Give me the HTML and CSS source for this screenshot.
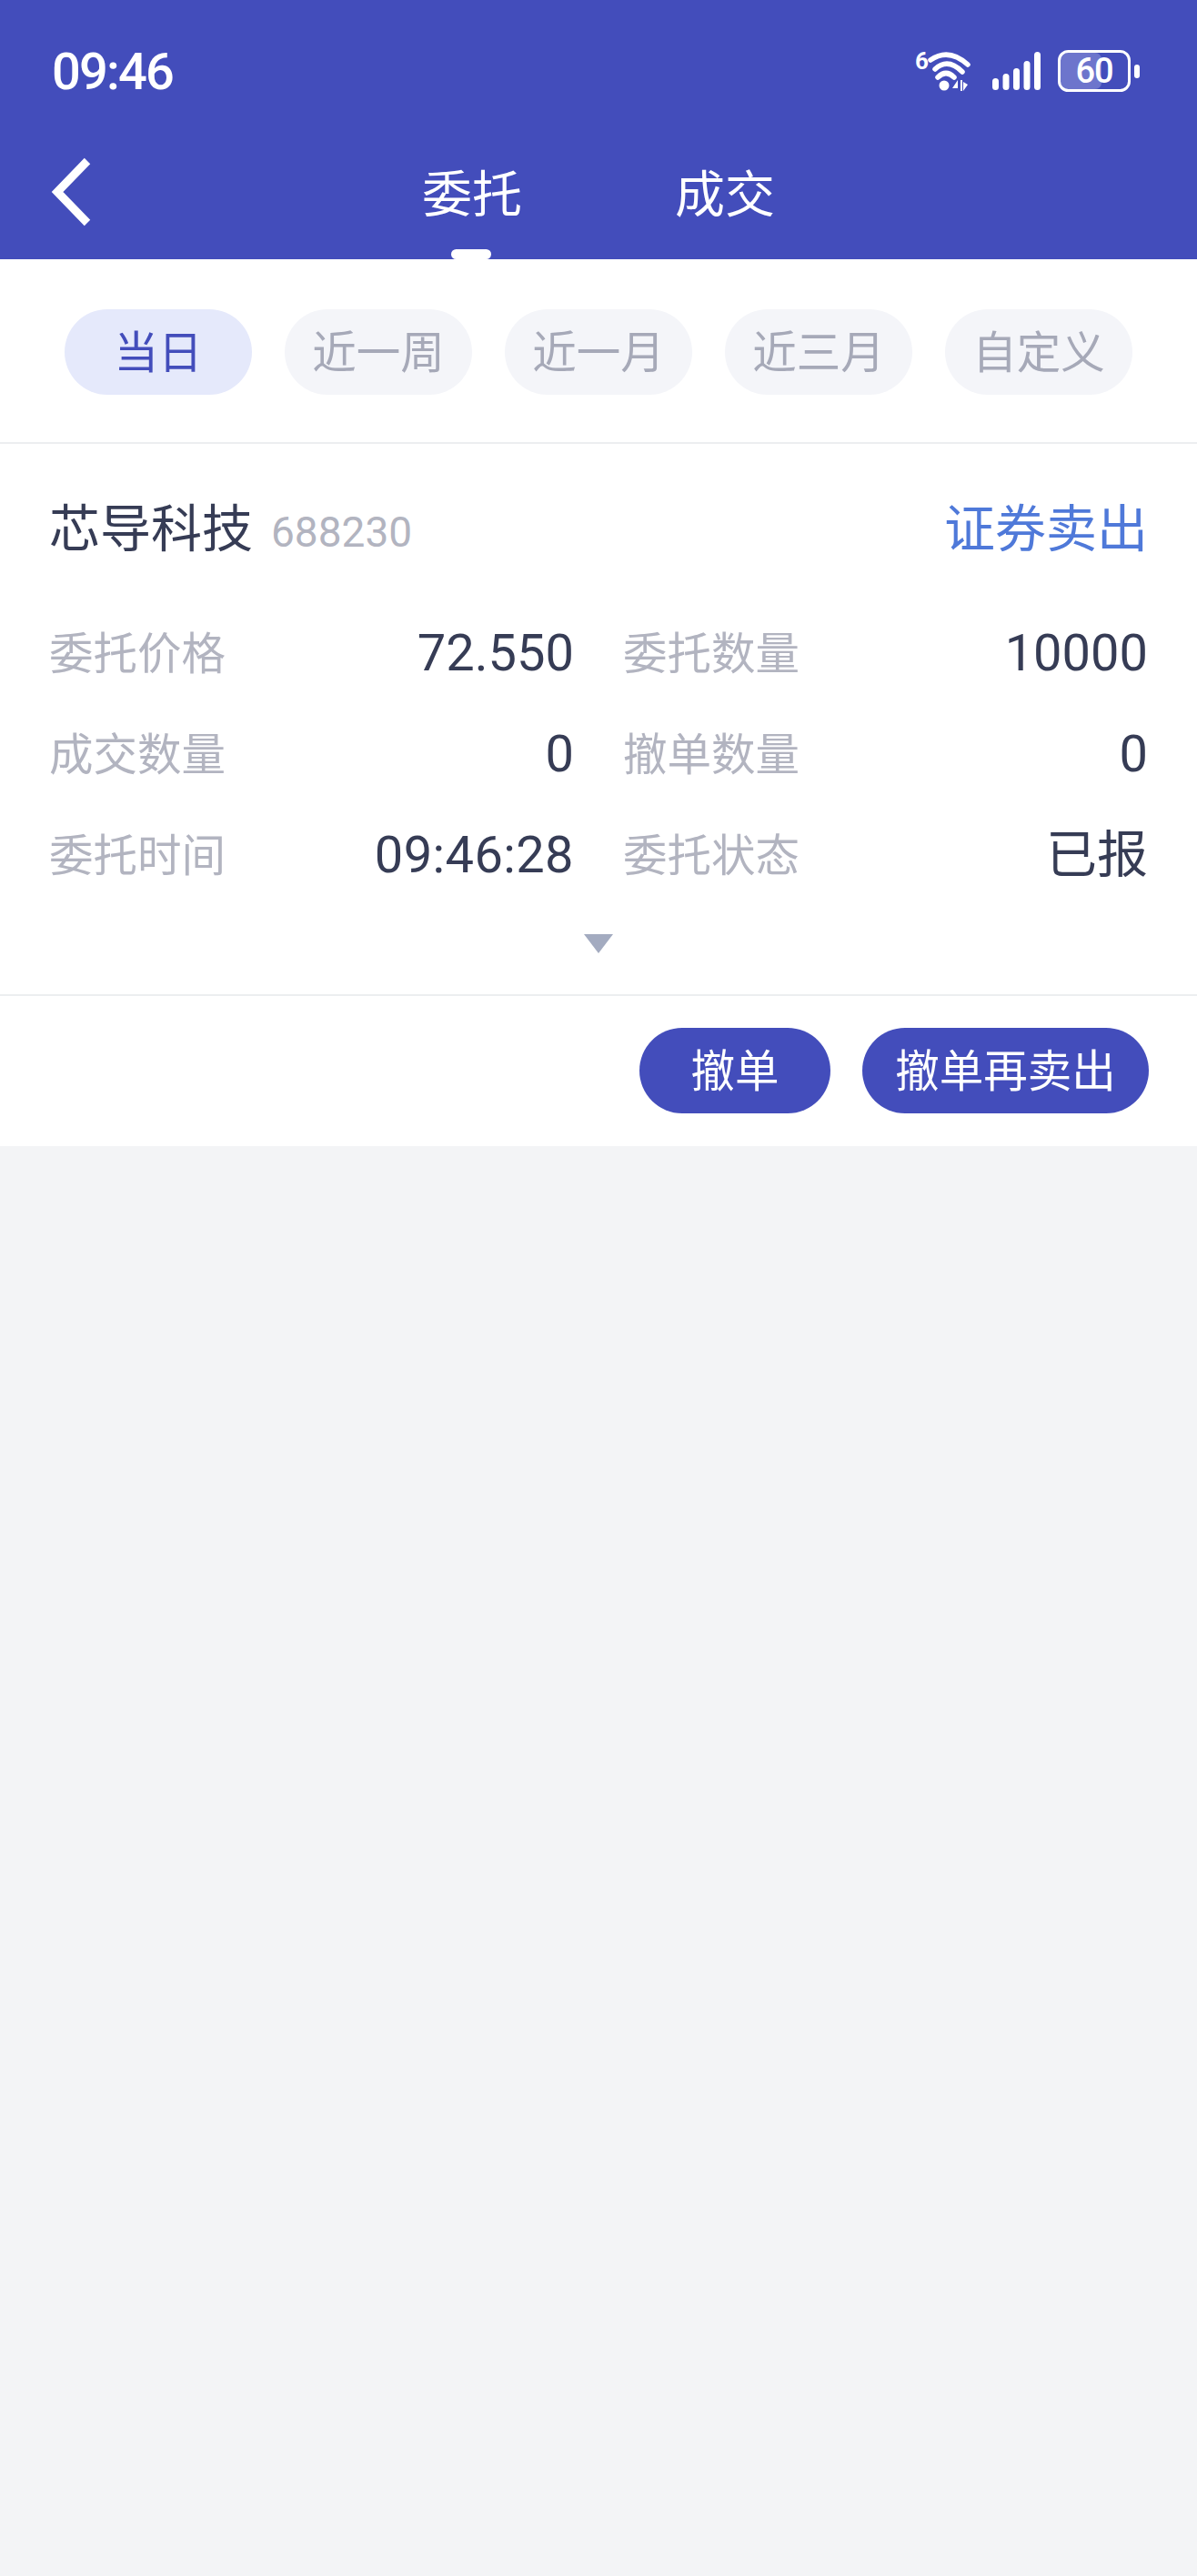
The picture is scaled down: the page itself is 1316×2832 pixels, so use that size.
FILE: index.html
```html
<!DOCTYPE html>
<html lang="zh-CN">
<head>
<meta charset="utf-8">
<title>委托</title>
<link rel="stylesheet" href="styles.css">
</head>
<body>
<div class="app">
  <header class="header">
    <div class="status">
      <span class="clock">09:46</span>
      <svg class="status-icons" width="250" height="64" viewBox="1005 44 250 64">
        <text class="wifi-six" x="1006" y="76">6</text>
        <g class="wifi-arcs">
          <path d="M1023 66 Q1043 52 1064 71"/>
          <path d="M1028 76 Q1042 63 1058 79"/>
          <path d="M1031 85 Q1040 76 1049 85"/>
        </g>
        <circle class="solid" cx="1038" cy="94" r="5.5"/>
        <path class="solid" d="M1047 97 L1053 88 V97 Z M1056 88 V100 H1058 V88 Z M1059 90 L1064 93 L1059 100 Z"/>
        <rect class="solid" x="1091" y="86" width="7" height="13" rx="3.5"/>
        <rect class="solid" x="1102.500" y="81" width="7" height="18" rx="3.5"/>
        <rect class="solid" x="1114" y="75" width="7" height="24" rx="3.5"/>
        <rect class="solid" x="1125.500" y="67" width="7" height="32" rx="3.5"/>
        <rect class="solid" x="1137" y="57" width="7" height="42" rx="3.5"/>
        <rect class="batt-fill" x="1165" y="58" width="46" height="40" rx="7"/>
        <rect class="batt-body" x="1164.500" y="56.500" width="77" height="43" rx="10"/>
        <rect class="solid" x="1247" y="71" width="6" height="15" rx="3"/>
        <text class="batt-text" x="1203" y="91">60</text>
      </svg>
    </div>
    <nav class="nav">
      <svg class="back" width="46" height="76" viewBox="0 0 46 76">
        <path d="M41 4 L8 38 L41 72" />
      </svg>
      <div class="tabs">
        <span class="tab tab-active">委托</span>
        <span class="tab">成交</span>
      </div>
    </nav>
  </header>

  <section class="filters">
    <span class="chip chip-active">当日</span>
    <span class="chip">近一周</span>
    <span class="chip">近一月</span>
    <span class="chip">近三月</span>
    <span class="chip">自定义</span>
  </section>

  <section class="order">
    <div class="order-head">
      <div class="stock">
        <span class="stock-name">芯导科技</span>
        <span class="stock-code">688230</span>
      </div>
      <span class="order-type">证券卖出</span>
    </div>
    <div class="grid">
      <div class="cell"><span class="label">委托价格</span><span class="value">72.550</span></div>
      <div class="cell"><span class="label">委托数量</span><span class="value">10000</span></div>
      <div class="cell"><span class="label">成交数量</span><span class="value">0</span></div>
      <div class="cell"><span class="label">撤单数量</span><span class="value">0</span></div>
      <div class="cell"><span class="label">委托时间</span><span class="value value-time">09:46:28</span></div>
      <div class="cell"><span class="label">委托状态</span><span class="value">已报</span></div>
    </div>
    <div class="expand"><span class="triangle"></span></div>
  </section>

  <footer class="actions">
    <button class="btn btn-small">撤单</button>
    <button class="btn btn-large">撤单再卖出</button>
  </footer>
</div>
</body>
</html>
```

FILE: styles.css
```css
* {
  box-sizing: border-box;
}

html,
body {
  margin: 0;
  padding: 0;
}

body {
  background: #f3f4f6;
  font-family: Roboto, "Noto Sans CJK SC", sans-serif;
}

.app {
  width: 1316px;
  min-height: 2832px;
  background: #f3f4f6;
}

.header {
  height: 285px;
  background: #434dbb;
  color: #fff;
}

.status {
  height: 160px;
  padding: 44px 61px 0 57px;
  display: flex;
  justify-content: space-between;
  align-items: flex-start;
}

.clock {
  margin-top: 10px;
  font-size: 56px;
  line-height: 50px;
  font-weight: 500;
  letter-spacing: -1.800px;
}

.status-icons {
  display: block;
}

.wifi-six {
  fill: #fff;
  font-family: Roboto, sans-serif;
  font-size: 26px;
  font-weight: 700;
}

.wifi-arcs path {
  fill: none;
  stroke: #fff;
  stroke-width: 5.500;
  stroke-linecap: round;
}

.solid {
  fill: #fff;
}

.batt-fill {
  fill: #6d75cc;
}

.batt-body {
  fill: none;
  stroke: #fff;
  stroke-width: 3;
}

.batt-text {
  fill: #fff;
  font-family: Roboto, sans-serif;
  font-size: 38px;
  font-weight: 500;
  letter-spacing: -1px;
  text-anchor: middle;
}

.nav {
  position: relative;
  height: 125px;
  display: flex;
  justify-content: center;
}

.back {
  position: absolute;
  left: 55px;
  top: 13px;
  fill: none;
  stroke: #fff;
  stroke-width: 9;
}

.tabs {
  display: flex;
  gap: 168px;
}

.tab {
  position: relative;
  display: block;
  width: 110px;
  height: 125px;
  padding-top: 14px;
  font-size: 55px;
  line-height: 80px;
  white-space: nowrap;
}

.tab-active::after {
  content: "";
  position: absolute;
  left: 32px;
  bottom: 0;
  width: 44px;
  height: 11px;
  background: #fff;
  border-radius: 6px;
}

.filters {
  height: 203px;
  padding: 55px 71px 0;
  display: flex;
  justify-content: space-between;
  align-items: flex-start;
  background: #fff;
  border-bottom: 2px solid #eceef0;
}

.chip {
  width: 206px;
  height: 94px;
  border-radius: 47px;
  background: #f4f5f9;
  color: #a6a9b8;
  font-size: 48.500px;
  line-height: 98px;
  text-align: center;
}

.chip-active {
  background: #e5e9fb;
  color: #434dbb;
}

.order {
  height: 607px;
  padding: 0 54px;
  background: #fff;
  border-bottom: 2px solid #eceef0;
}

.order-head {
  height: 174px;
  padding-top: 56px;
  display: flex;
  justify-content: space-between;
  align-items: flex-start;
}

.stock {
  display: flex;
  align-items: baseline;
  gap: 20px;
}

.stock-name {
  color: #363c55;
  font-size: 56px;
  line-height: 76px;
}

.stock-code {
  color: #b2b4c0;
  font-size: 46px;
  line-height: 76px;
}

.order-type {
  color: #4f79d9;
  font-size: 56px;
  line-height: 76px;
}

.grid {
  display: grid;
  grid-template-columns: 1fr 1fr;
  column-gap: 54px;
}

.cell {
  height: 111px;
  display: flex;
  justify-content: space-between;
  align-items: center;
}

.label {
  color: #b2b4c0;
  font-size: 48.500px;
  line-height: 66px;
  margin-top: 5px;
}

.value {
  color: #363c55;
  font-size: 56px;
  line-height: 66px;
}

.value-time {
  letter-spacing: 0.400px;
}

.expand {
  display: flex;
  justify-content: center;
  padding-top: 32px;
}

.triangle {
  width: 0;
  height: 0;
  border-left: 16px solid transparent;
  border-right: 16px solid transparent;
  border-top: 21px solid #a3abc0;
}

.actions {
  height: 165px;
  padding: 35px 53px 0 0;
  display: flex;
  justify-content: flex-end;
  align-items: flex-start;
  gap: 35px;
  background: #fff;
}

.btn {
  height: 94px;
  padding: 0;
  border: 0;
  border-radius: 47px;
  background: #434dbb;
  color: #fff;
  font-family: inherit;
  font-size: 48.500px;
  line-height: 98px;
}

.btn-small {
  width: 210px;
}

.btn-large {
  width: 315px;
}
```
